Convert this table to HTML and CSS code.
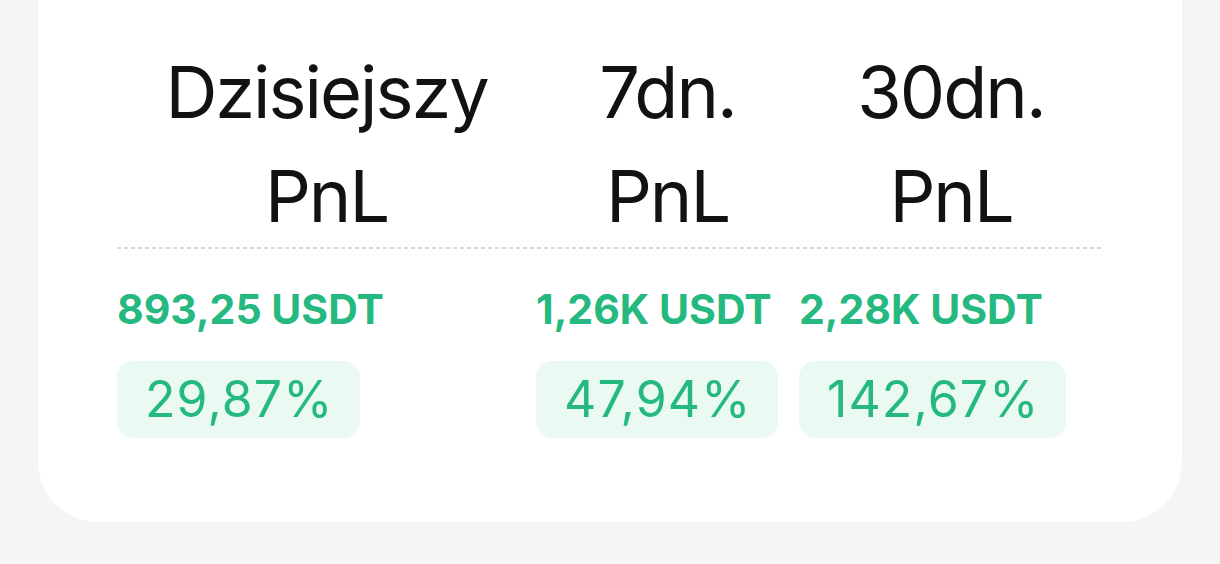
FILE: index.html
```html
<!DOCTYPE html>
<html lang="pl">
<head>
<meta charset="utf-8">
<link rel="stylesheet" href="styles.css">
</head>
<body>
<div class="card">
  <div class="pnl-grid">
    <div class="head">Dzisiejszy<br>PnL</div>
    <div class="head">7dn.<br>PnL</div>
    <div class="head">30dn.<br>PnL</div>
    <div class="divider"></div>
    <div class="cell">
      <div class="amount">893,25 USDT</div>
      <div class="badge">29,87%</div>
    </div>
    <div class="cell">
      <div class="amount">1,26K USDT</div>
      <div class="badge">47,94%</div>
    </div>
    <div class="cell">
      <div class="amount">2,28K USDT</div>
      <div class="badge">142,67%</div>
    </div>
  </div>
</div>
</body>
</html>
```
FILE: styles.css
```css
* { box-sizing: border-box; }
html, body {
  margin: 0;
  padding: 0;
  background: #f5f5f5;
  font-family: Inter, "Noto Sans", sans-serif;
}
.card {
  margin: 0 38px;
  height: 522px;
  background: #ffffff;
  border-radius: 0 0 60px 60px;
  padding: 40px 79px 0;
}
.pnl-grid {
  display: grid;
  grid-template-columns: 419px 263px 304px;
}
.head {
  text-align: center;
  font-size: 72px;
  line-height: 104px;
  font-weight: 400;
  color: #121212;
  letter-spacing: -2px;
}
.divider {
  grid-column: 1 / -1;
  height: 2px;
  margin-top: -1px;
  background: repeating-linear-gradient(to right, #d9d9d9 0 4px, transparent 4px 7px);
}
.cell {
  padding-top: 35px;
  display: flex;
  flex-direction: column;
  align-items: flex-start;
}
.amount {
  font-size: 41px;
  line-height: 50px;
  font-weight: 700;
  color: #25b980;
  letter-spacing: 0;
}
.badge {
  margin-top: 27px;
  height: 77px;
  line-height: 77px;
  padding: 0 27px 0 28px;
  font-size: 50px;
  font-weight: 400;
  color: #25b980;
  background: #eafaf3;
  border-radius: 16px;
  letter-spacing: 1.1px;
}
```
